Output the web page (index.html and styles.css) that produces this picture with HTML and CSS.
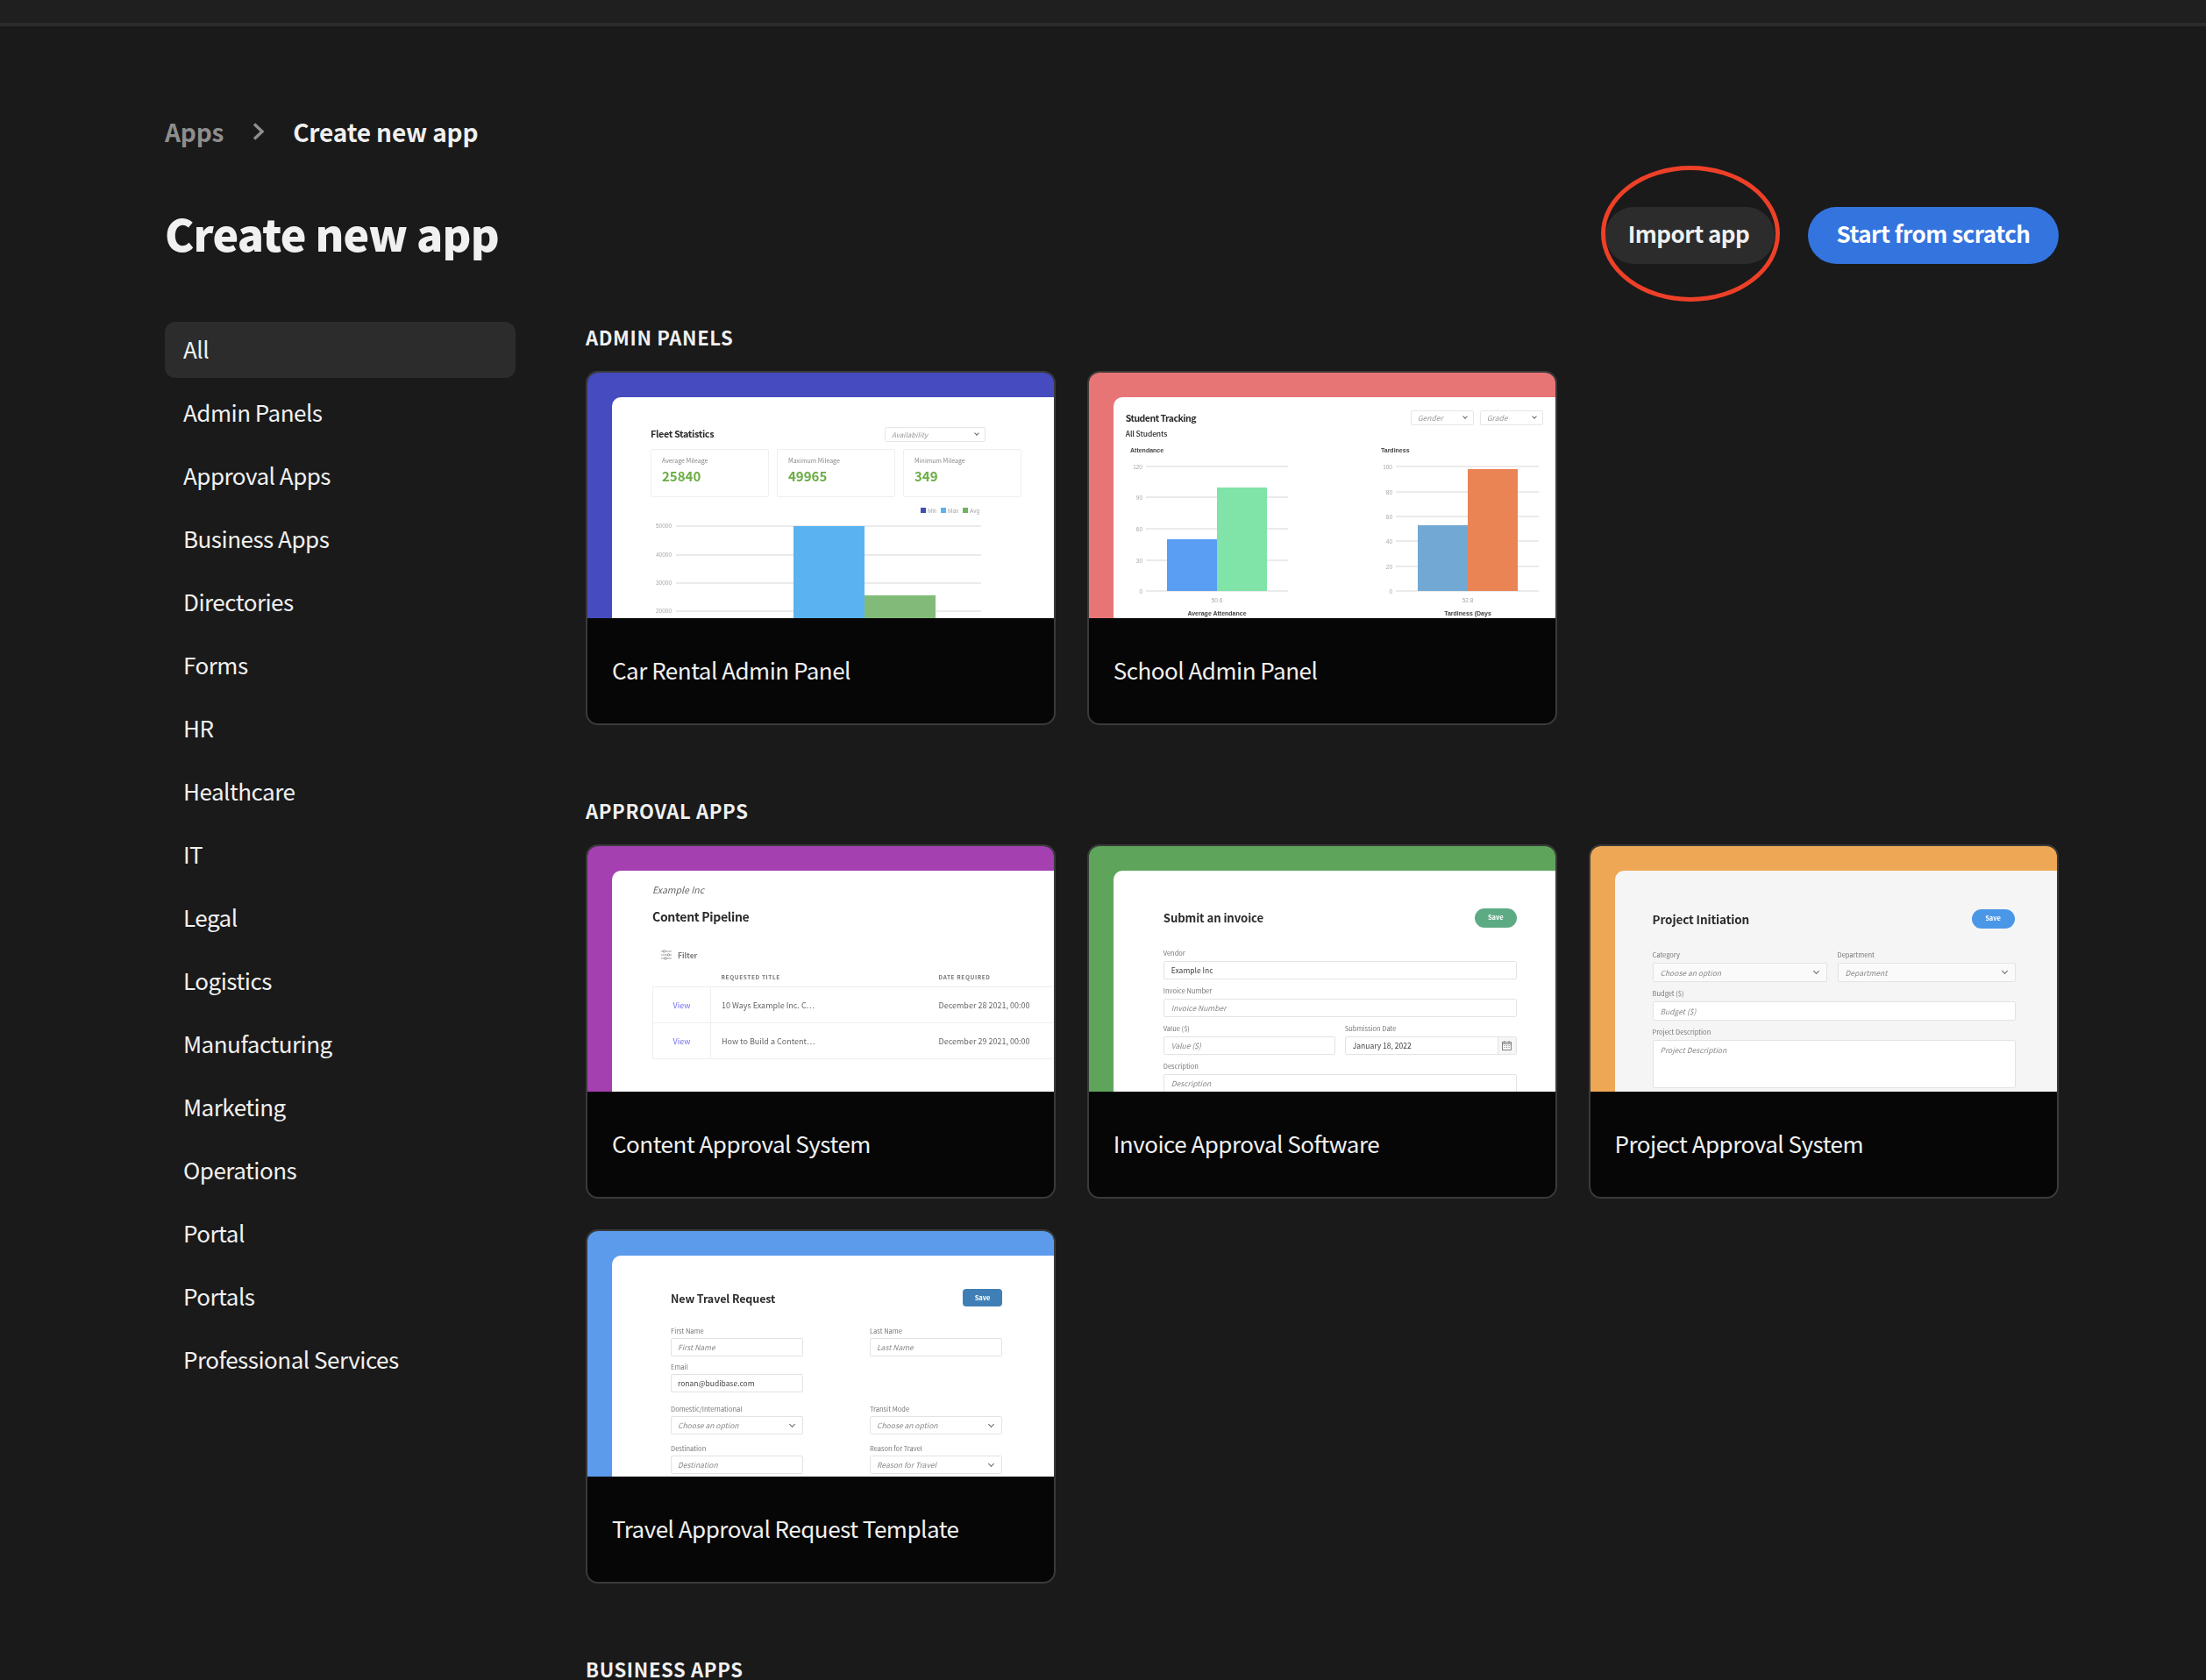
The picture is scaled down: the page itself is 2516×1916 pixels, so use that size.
FILE: index.html
```html
<!DOCTYPE html>
<html lang="en">
<head>
    <meta charset="UTF-8">
    <title>Create new app</title>
    <link rel="stylesheet" href="styles.css">
</head>
<body>

    <div class="topbar"></div>

    <div class="page">
        <div class="breadcrumb">
            <span class="crumb-link">Apps</span>
            <svg class="crumb-sep" width="13" height="20" viewBox="0 0 13 20"><path d="M2 1.5 L11 10 L2 18.5" fill="none" stroke="#8e8e8e" stroke-width="3.4"/></svg>
            <span class="crumb-current">Create new app</span>
        </div>

        <div class="header">
            <h1>Create new app</h1>
            <div class="actions">
                <div class="import-wrap">
                    <button class="btn btn-dark">Import app</button>
                    <div class="red-circle"></div>
                </div>
                <button class="btn btn-blue">Start from scratch</button>
            </div>
        </div>

        <div class="content">
            <ul class="sidebar">
                <li class="active">All</li>
                <li>Admin Panels</li>
                <li>Approval Apps</li>
                <li>Business Apps</li>
                <li>Directories</li>
                <li>Forms</li>
                <li>HR</li>
                <li>Healthcare</li>
                <li>IT</li>
                <li>Legal</li>
                <li>Logistics</li>
                <li>Manufacturing</li>
                <li>Marketing</li>
                <li>Operations</li>
                <li>Portal</li>
                <li>Portals</li>
                <li>Professional Services</li>
            </ul>

            <div class="templates">
                <h2>Admin Panels</h2>
                <div class="card-grid">

                    <div class="card">
                        <div class="preview indigo">
                            <div class="panel fleet">
                                <div class="fleet-head">
                                    <span class="mini-title">Fleet Statistics</span>
                                    <div class="select fleet-select">Availability</div>
                                </div>
                                <div class="stats">
                                    <div class="stat"><span>Average Mileage</span><b>25840</b></div>
                                    <div class="stat"><span>Maximum Mileage</span><b>49965</b></div>
                                    <div class="stat"><span>Minimum Mileage</span><b>349</b></div>
                                </div>
                                <svg class="chart fleet-chart" width="461" height="130" viewBox="0 0 461 130">
                                    <rect x="308" y="4" width="6" height="6" fill="#3a4ab0"/><text x="316" y="10">Min</text>
                                    <rect x="331" y="4" width="6" height="6" fill="#55b1f0"/><text x="339" y="10">Max</text>
                                    <rect x="356" y="4" width="6" height="6" fill="#6bb05a"/><text x="364" y="10">Avg</text>
                                    <path d="M29 25H377M29 58H377M29 90H377M29 122H377" stroke="#d6d6d6"/>
                                    <g text-anchor="end">
                                        <text x="24" y="27">50000</text>
                                        <text x="24" y="60">40000</text>
                                        <text x="24" y="92">30000</text>
                                        <text x="24" y="124">20000</text>
                                    </g>
                                    <rect x="163" y="25" width="81" height="105" fill="#55b1f0"/>
                                    <rect x="244" y="104" width="81" height="26" fill="#7eb975"/>
                                </svg>
                            </div>
                        </div>
                        <div class="caption">Car Rental Admin Panel</div>
                    </div>

                    <div class="card">
                        <div class="preview coral">
                            <div class="panel school">
                                <div class="school-head">
                                    <span class="mini-title school-title">Student Tracking</span>
                                    <div class="school-filters">
                                        <div class="select school-select">Gender</div>
                                        <div class="select school-select">Grade</div>
                                    </div>
                                </div>
                                <div class="school-sub">All Students</div>
                                <svg class="chart school-chart" width="506" height="200" viewBox="0 0 506 200">
                                    <text class="chart-head" x="19" y="11">Attendance</text>
                                    <path d="M37 27H199M37 62H199M37 98H199M37 134H199M37 169H199" stroke="#d6d6d6"/>
                                    <g text-anchor="end">
                                        <text x="33" y="30">120</text>
                                        <text x="33" y="65">90</text>
                                        <text x="33" y="101">60</text>
                                        <text x="33" y="137">30</text>
                                        <text x="33" y="172">0</text>
                                    </g>
                                    <rect x="61" y="110" width="57" height="59" fill="#5a9ef3"/>
                                    <rect x="118" y="51" width="57" height="118" fill="#80e3a8"/>
                                    <text x="118" y="182" text-anchor="middle">50.6</text>
                                    <text class="chart-head" x="118" y="197" text-anchor="middle">Average Attendance</text>

                                    <text class="chart-head" x="305" y="11">Tardiness</text>
                                    <path d="M322 27H485M322 56H485M322 84H485M322 112H485M322 141H485M322 169H485" stroke="#d6d6d6"/>
                                    <g text-anchor="end">
                                        <text x="318" y="30">100</text>
                                        <text x="318" y="59">80</text>
                                        <text x="318" y="87">60</text>
                                        <text x="318" y="115">40</text>
                                        <text x="318" y="144">20</text>
                                        <text x="318" y="172">0</text>
                                    </g>
                                    <rect x="347" y="94" width="57" height="75" fill="#72a9d4"/>
                                    <rect x="404" y="30" width="57" height="139" fill="#ea8455"/>
                                    <text x="404" y="182" text-anchor="middle">52.8</text>
                                    <text class="chart-head" x="404" y="197" text-anchor="middle">Tardiness (Days</text>
                                </svg>
                            </div>
                        </div>
                        <div class="caption">School Admin Panel</div>
                    </div>
                </div>

                <h2>Approval Apps</h2>
                <div class="card-grid">

                    <div class="card">
                        <div class="preview purple">
                            <div class="panel pipeline">
                                <div class="pipe-company">Example Inc</div>
                                <div class="mini-title pipe-title">Content Pipeline</div>
                                <div class="pipe-filter">
                                    <svg width="12" height="12" viewBox="0 0 12 12" fill="none" stroke="#8a8a8a" stroke-width=".8">
                                        <path d="M0 2H12M0 6H12M0 10H12"/>
                                        <circle cx="3.5" cy="2" r="1.3" fill="#fff"/>
                                        <circle cx="8.5" cy="6" r="1.3" fill="#fff"/>
                                        <circle cx="5" cy="10" r="1.3" fill="#fff"/>
                                    </svg>
                                    Filter
                                </div>
                                <table class="pipe-table">
                                    <thead>
                                        <tr><th></th><th>Requested title</th><th>Date required</th></tr>
                                    </thead>
                                    <tbody>
                                        <tr><td class="view-link">View</td><td>10 Ways Example Inc. C…</td><td>December 28 2021, 00:00</td></tr>
                                        <tr><td class="view-link">View</td><td>How to Build a Content…</td><td>December 29 2021, 00:00</td></tr>
                                    </tbody>
                                </table>
                            </div>
                        </div>
                        <div class="caption">Content Approval System</div>
                    </div>

                    <div class="card">
                        <div class="preview green">
                            <div class="panel invoice">
                                <div class="form-head">
                                    <span class="mini-title">Submit an invoice</span>
                                    <span class="save save-green">Save</span>
                                </div>
                                <div class="form">
                                    <div class="field wide"><label>Vendor</label><div class="input filled">Example Inc</div></div>
                                    <div class="field wide"><label>Invoice Number</label><div class="input">Invoice Number</div></div>
                                    <div class="field"><label>Value ($)</label><div class="input">Value ($)</div></div>
                                    <div class="field">
                                        <label>Submission Date</label>
                                        <div class="input filled date">
                                            January 18, 2022
                                            <span class="date-btn">
                                                <svg width="11" height="11" viewBox="0 0 11 11" fill="none" stroke="#777" stroke-width=".9">
                                                    <rect x=".5" y="1.5" width="10" height="9"/>
                                                    <path d="M3 0V2.5M8 0V2.5M.5 3.5H10.5M2.5 5.5H3.5M5 5.5H6M7.5 5.5H8.5M2.5 7.5H3.5M5 7.5H6M7.5 7.5H8.5"/>
                                                </svg>
                                            </span>
                                        </div>
                                    </div>
                                    <div class="field wide"><label>Description</label><div class="input">Description</div></div>
                                </div>
                            </div>
                        </div>
                        <div class="caption">Invoice Approval Software</div>
                    </div>

                    <div class="card">
                        <div class="preview orange">
                            <div class="panel project">
                                <div class="form-head">
                                    <span class="mini-title">Project Initiation</span>
                                    <span class="save save-blue">Save</span>
                                </div>
                                <div class="form">
                                    <div class="field"><label>Category</label><div class="input select-input soft">Choose an option</div></div>
                                    <div class="field"><label>Department</label><div class="input select-input soft">Department</div></div>
                                    <div class="field wide"><label>Budget ($)</label><div class="input">Budget ($)</div></div>
                                    <div class="field wide"><label>Project Description</label><div class="input textarea">Project Description</div></div>
                                </div>
                            </div>
                        </div>
                        <div class="caption">Project Approval System</div>
                    </div>

                    <div class="card">
                        <div class="preview sky">
                            <div class="panel travel">
                                <div class="form-head">
                                    <span class="mini-title">New Travel Request</span>
                                    <span class="save save-square">Save</span>
                                </div>
                                <div class="form">
                                    <div class="field"><label>First Name</label><div class="input">First Name</div></div>
                                    <div class="field"><label>Last Name</label><div class="input">Last Name</div></div>
                                    <div class="field"><label>Email</label><div class="input filled">ronan@budibase.com</div></div>
                                    <div class="field"></div>
                                    <div class="field push"><label>Domestic/International</label><div class="input select-input">Choose an option</div></div>
                                    <div class="field push"><label>Transit Mode</label><div class="input select-input">Choose an option</div></div>
                                    <div class="field push-small"><label>Destination</label><div class="input">Destination</div></div>
                                    <div class="field push-small"><label>Reason for Travel</label><div class="input select-input">Reason for Travel</div></div>
                                </div>
                            </div>
                        </div>
                        <div class="caption">Travel Approval Request Template</div>
                    </div>
                </div>

                <h2>Business Apps</h2>
            </div>
        </div>
    </div>

</body>
</html>
```

FILE: styles.css
```css
html, body {
    height: 1916px;
    overflow: hidden;
}

body {
    margin: 0;
    background-color: #1a1a1a;
    color: #f0f0f0;
    font-family: "Noto Sans CJK SC", "Noto Sans", sans-serif;
}

.topbar {
    height: 26px;
    background-color: #1f1f1f;
    border-bottom: 4px solid #2c2c2c;
}

.page {
    padding: 100px 168px 0 188px;
}

/* breadcrumb */
.breadcrumb {
    display: flex;
    align-items: center;
    height: 40px;
    font-size: 28px;
    font-weight: 700;
    letter-spacing: -.15px;
}

.crumb-link {
    color: #8e8e8e;
}

.crumb-sep {
    margin: 0 33px 0 33px;
}

.crumb-current {
    color: #f0f0f0;
}

/* header */
.header {
    display: flex;
    align-items: center;
    justify-content: space-between;
    height: 65px;
    margin-top: 66px;
}

h1 {
    margin: 0 0 6px;
    font-size: 50px;
    font-weight: 900;
    line-height: 65px;
    letter-spacing: -.75px;
}

.actions {
    display: flex;
    gap: 38px;
}

.import-wrap {
    position: relative;
}

.red-circle {
    position: absolute;
    left: -5px;
    right: -6px;
    top: -47px;
    bottom: -43px;
    border: 5px solid #ee4028;
    border-radius: 50%;
}

.btn {
    display: block;
    height: 65px;
    padding: 0 0 6px;
    border: none;
    border-radius: 33px;
    font-family: inherit;
    font-size: 26px;
    font-weight: 700;
    letter-spacing: -.5px;
    color: #f0f0f0;
    text-align: center;
}

.btn-dark {
    width: 193px;
    padding-right: 3px;
    background-color: #2c2c2c;
}

.btn-blue {
    width: 286px;
    background-color: #3474df;
    color: #fff;
}

/* layout */
.content {
    display: grid;
    grid-template-columns: 400px 1680px;
    gap: 80px;
    margin-top: 66px;
}

.sidebar {
    list-style-type: none;
    margin: 0;
    padding: 0;
}

.sidebar li {
    height: 64px;
    margin-bottom: 8px;
    padding-left: 21px;
    border-radius: 12px;
    font-size: 26px;
    line-height: 62px;
    letter-spacing: -.5px;
}

.sidebar .active {
    background-color: #2c2c2c;
}

h2 {
    margin: 0 0 22px;
    font-size: 22px;
    font-weight: 700;
    line-height: 34px;
    letter-spacing: .65px;
    text-transform: uppercase;
}

.card-grid {
    display: grid;
    grid-template-columns: repeat(3, 536px);
    gap: 35px 35.75px;
    margin-bottom: 80px;
}

/* cards */
.card {
    height: 404px;
    box-sizing: border-box;
    border: 2px solid #3a3a3a;
    border-radius: 14px;
    background-color: #060606;
    overflow: hidden;
}

.caption {
    height: 120px;
    padding-left: 28px;
    font-size: 26px;
    line-height: 118px;
    letter-spacing: -.5px;
}

.preview {
    height: 280px;
    box-sizing: border-box;
    padding: 28px 0 0 28px;
    overflow: hidden;
}

.indigo { background-color: #464bbf; }
.coral { background-color: #e87576; }
.purple { background-color: #a440b0; }
.green { background-color: #5ea55b; }
.orange { background-color: #eea855; }
.sky { background-color: #5c9bec; }

.panel {
    height: 252px;
    box-sizing: border-box;
    background: white;
    border-radius: 10px 0 0 0;
    color: #2b2b2b;
    overflow: hidden;
    filter: blur(.35px);
}

.mini-title {
    font-size: 13px;
    font-weight: 700;
    line-height: 18px;
    letter-spacing: -.1px;
    color: #2b2b2b;
}

.select {
    position: relative;
    box-sizing: border-box;
    height: 17px;
    padding-left: 7px;
    border: 1px solid #e6e6e6;
    border-radius: 2px;
    font-size: 8px;
    font-style: italic;
    line-height: 15px;
    color: #999;
}

.select::after,
.select-input::after {
    content: "";
    position: absolute;
    right: 7px;
    top: 4px;
    width: 3px;
    height: 3px;
    border-right: 1px solid #666;
    border-bottom: 1px solid #666;
    transform: rotate(45deg);
}

/* fleet card */
.fleet {
    padding: 34px 0 0 44px;
}

.fleet .mini-title {
    margin-bottom: 3px;
    font-size: 10.8px;
    letter-spacing: -.35px;
}

.fleet-head {
    display: flex;
    align-items: center;
    justify-content: space-between;
    width: 382px;
    height: 17px;
}

.fleet-select {
    width: 115px;
}

.stats {
    display: grid;
    grid-template-columns: repeat(3, 135px);
    gap: 9px;
    margin-top: 8px;
}

.stat {
    height: 55px;
    box-sizing: border-box;
    padding: 6px 0 0 12px;
    border: 1px solid #efefef;
    border-radius: 2px;
}

.stat span {
    display: block;
    font-size: 7px;
    line-height: 12px;
    color: #8a8a8a;
}

.stat b {
    display: block;
    font-size: 15px;
    font-weight: 700;
    line-height: 23px;
    color: #6aad45;
}

.chart {
    display: block;
    font-family: "Liberation Sans", sans-serif;
    font-size: 6.5px;
    fill: #a8a8a8;
}

.chart-head {
    font-size: 7px;
    font-weight: 700;
    fill: #444;
}

.fleet-chart {
    margin-top: 8px;
}

.fleet-chart rect {
    fill-opacity: .97;
}

/* school card */
.school {
    padding-top: 15px;
}

.school-head {
    display: flex;
    align-items: center;
    justify-content: space-between;
    height: 17px;
    margin: 0 14px 0 14px;
}

.school .school-title {
    font-size: 10.5px;
    line-height: 14px;
    letter-spacing: -.5px;
}

.school-filters {
    display: flex;
    gap: 7px;
}

.school-select {
    width: 72px;
    font-size: 8.5px;
}

.school-sub {
    margin: 2px 0 0 14px;
    font-size: 8.5px;
    font-weight: 500;
    line-height: 14px;
    letter-spacing: -.1px;
}

.school-chart {
    margin-top: 4px;
}

/* content pipeline card */
.pipeline {
    padding: 15px 0 0 46px;
}

.pipe-company {
    font-size: 10.5px;
    font-style: italic;
    line-height: 14px;
    color: #666;
}

.pipe-title {
    margin-top: 13px;
    font-size: 14px;
    line-height: 20px;
    letter-spacing: -.3px;
}

.pipe-filter {
    display: flex;
    align-items: center;
    gap: 7px;
    margin: 27px 0 0 10px;
    font-size: 8.5px;
    font-weight: 700;
    line-height: 14px;
    color: #777;
}

.pipe-table {
    width: 500px;
    margin-top: 12px;
    table-layout: fixed;
    border-collapse: collapse;
    font-size: 9px;
    color: #666;
}

.pipe-table th {
    height: 17px;
    padding: 0 0 0 12px;
    font-size: 6.5px;
    font-weight: 700;
    line-height: 12px;
    letter-spacing: .6px;
    text-align: left;
    vertical-align: top;
    text-transform: uppercase;
    color: #777;
}

.pipe-table th:first-child {
    width: 66px;
    padding: 0;
}

.pipe-table th:nth-child(2) {
    width: 236px;
}

.pipe-table td {
    height: 40px;
    padding: 0 0 0 12px;
    border-top: 1px solid #efefef;
    border-bottom: 1px solid #efefef;
    white-space: nowrap;
}

.pipe-table .view-link {
    padding: 0;
    border: 1px solid #efefef;
    text-align: center;
    color: #6f6ff2;
}

/* forms */
.form-head {
    display: flex;
    align-items: center;
    justify-content: space-between;
}

.save {
    font-size: 7.5px;
    font-weight: 700;
    color: white;
    text-align: center;
}

.save-green {
    width: 48px;
    height: 22px;
    border-radius: 11px;
    background-color: #5dab85;
    line-height: 20px;
}

.save-blue {
    width: 49px;
    height: 22px;
    border-radius: 11px;
    background-color: #4a97e8;
    line-height: 20px;
}

.save-square {
    width: 45px;
    height: 20px;
    border-radius: 4px;
    background-color: #3f7fb5;
    line-height: 19px;
}

.form {
    display: grid;
    grid-template-columns: 1fr 1fr;
    gap: 6px 11px;
}

.wide {
    grid-column: 1 / -1;
}

.field label {
    display: block;
    margin-bottom: 2px;
    font-size: 7.5px;
    line-height: 14px;
    color: #777;
}

.input {
    position: relative;
    box-sizing: border-box;
    height: 21px;
    padding-left: 8px;
    border: 1px solid #e3e3e3;
    border-radius: 2px;
    background: white;
    font-size: 8.5px;
    font-style: italic;
    line-height: 19px;
    color: #888;
}

.input.filled {
    font-style: normal;
    color: #444;
}

.select-input::after {
    top: 6px;
    right: 9px;
    width: 4px;
    height: 4px;
}

.select-input.soft {
    background-color: #fafafa;
}

.date-btn {
    position: absolute;
    top: 0;
    right: 0;
    display: flex;
    align-items: center;
    justify-content: center;
    width: 20px;
    height: 19px;
    border-left: 1px solid #e3e3e3;
    background-color: #f6f6f6;
}

.invoice {
    padding: 43px 44px 0 57px;
}

.invoice .mini-title {
    font-size: 13.2px;
}

.invoice .form-head {
    margin-bottom: 22px;
}

.project {
    padding: 44px 48px 0 43px;
    background-color: #f5f5f5;
}

.project .mini-title {
    font-size: 13.5px;
}

.project .form-head {
    margin-bottom: 23px;
}

.project .input {
    height: 22px;
    line-height: 20px;
}

.project .form {
    grid-template-columns: 199px 203px;
    gap: 6px 12px;
}

.project .input.textarea {
    height: 55px;
}

.travel {
    padding: 38px 59px 0 67px;
}

.travel .mini-title {
    padding-top: 2px;
    font-size: 12.5px;
}

.travel .form-head {
    margin-bottom: 21px;
}

.travel .form {
    gap: 5px 76px;
}

.travel .field label {
    margin-bottom: 1px;
}

.travel .input {
    padding-left: 7px;
}

.travel .push {
    margin-top: 7px;
}

.travel .push-small {
    margin-top: 4px;
}
```
